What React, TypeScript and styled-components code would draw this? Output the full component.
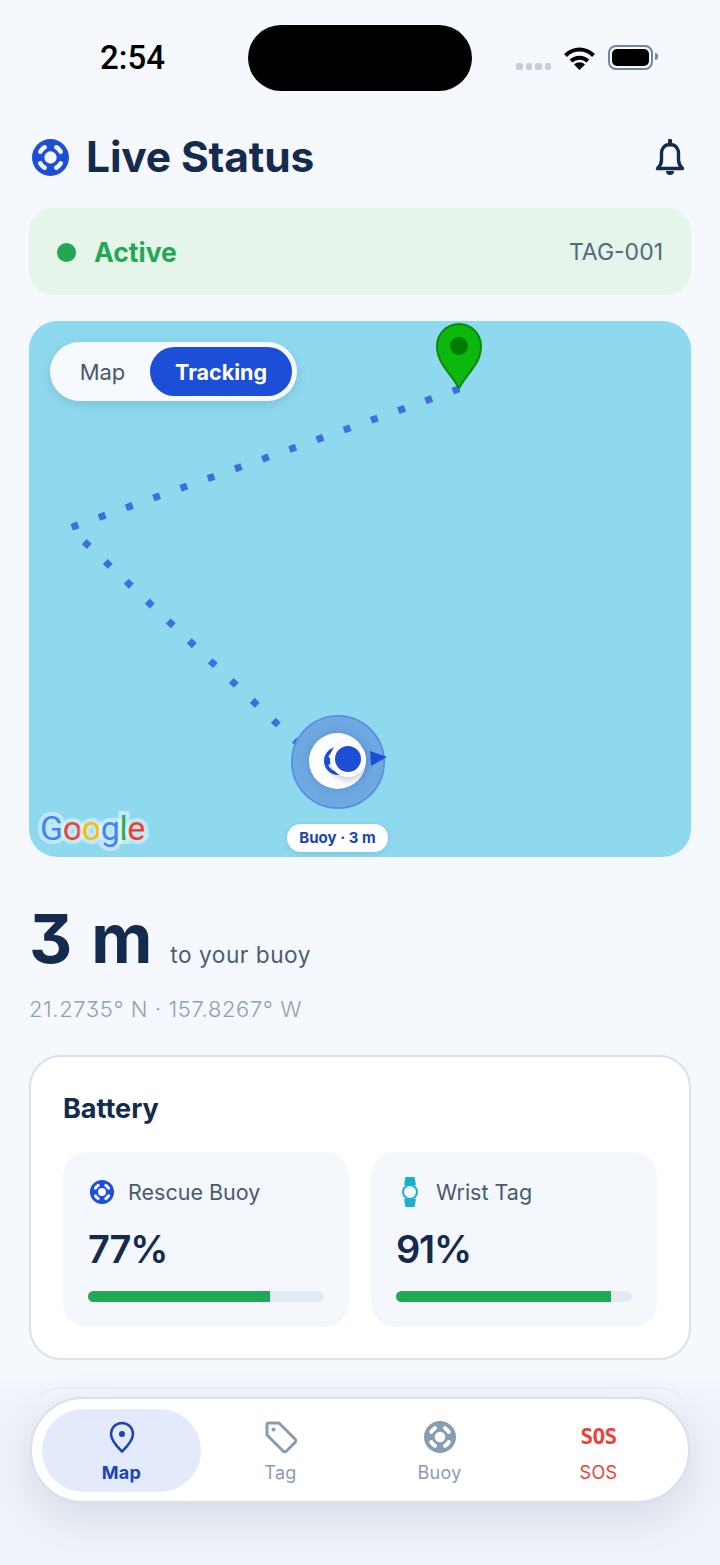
import React from "react";
import styled, { createGlobalStyle } from "styled-components";

const GlobalStyle = createGlobalStyle`
  html, body {
    margin: 0;
    padding: 0;
    background: #f5f8fd;
  }
  * {
    box-sizing: border-box;
  }
`;

const Page = styled.div`
  position: relative;
  width: 720px;
  height: 1565px;
  overflow: hidden;
  padding: 25px 29px 0;
  background: #f5f8fd;
  font-family: Inter, "Liberation Sans", sans-serif;
  color: #142b4d;
`;

const StatusBar = styled.div`
  display: grid;
  grid-template-columns: 219px 224px 1fr;
  height: 66px;
`;

const Clock = styled.div`
  align-self: center;
  padding: 0 0 0 71px;
  font-family: Roboto, Inter, sans-serif;
  font-size: 33px;
  font-weight: 500;
  line-height: 66px;
  color: #000;
`;

const Island = styled.div`
  background: #000;
  border-radius: 33px;
`;

const StatusIcons = styled.div`
  display: flex;
  align-items: center;
  padding-left: 44px;
`;

const SignalDots = styled.div`
  display: flex;
  gap: 3px;
  margin: 16px 13px 0 0;
`;

const SignalDot = styled.span`
  width: 6.5px;
  height: 7px;
  border-radius: 2px;
  background: #c3cfd9;
`;

const Battery = styled.div`
  position: relative;
  width: 45px;
  height: 25px;
  margin: -2px 0 0 13px;
  padding: 2px;
  border: 2px solid #6f869f;
  border-radius: 8px;
  &::after {
    content: "";
    position: absolute;
    top: 6px;
    right: -7px;
    width: 3px;
    height: 7px;
    border-radius: 0 3px 3px 0;
    background: #6f869f;
  }
`;

const BatteryLevel = styled.div`
  height: 100%;
  border-radius: 5px;
  background: #000;
`;

const Header = styled.header`
  display: flex;
  align-items: center;
  justify-content: space-between;
  height: 50px;
  margin-top: 41px;
  padding: 0 6px 0 3px;
`;

const TitleGroup = styled.div`
  display: flex;
  align-items: center;
  gap: 17px;
`;

const Title = styled.h1`
  margin: 0;
  font-size: 42.5px;
  font-weight: 700;
  line-height: 50px;
  letter-spacing: -0.15px;
`;

const StatusCard = styled.section`
  display: flex;
  align-items: center;
  justify-content: space-between;
  height: 87px;
  margin-top: 26px;
  padding: 1px 28px 0;
  border-radius: 24px;
  background: #e5f5ea;
`;

const ActiveGroup = styled.div`
  display: flex;
  align-items: center;
  gap: 18px;
`;

const ActiveDot = styled.span`
  width: 19px;
  height: 19px;
  border-radius: 50%;
  background: #22a852;
`;

const ActiveText = styled.span`
  font-size: 26.5px;
  font-weight: 700;
  color: #22a852;
`;

const TagId = styled.span`
  font-size: 23px;
  font-weight: 400;
  color: #54677f;
`;

const MapPanel = styled.section`
  position: relative;
  height: 536px;
  margin-top: 26px;
  border-radius: 28px;
  overflow: hidden;
  background: #8fd9ee;
`;

const MapLayer = styled.svg`
  position: absolute;
  inset: 0;
`;

const Toggle = styled.div`
  position: absolute;
  top: 21px;
  left: 21px;
  display: flex;
  align-items: center;
  width: 247px;
  height: 59px;
  padding: 5px;
  border-radius: 30px;
  background: #f6f9fd;
  box-shadow: 0 4px 12px rgba(20, 60, 100, 0.14);
`;

const ToggleOption = styled.div<{ $active?: boolean }>`
  display: flex;
  align-items: center;
  justify-content: center;
  height: 49px;
  border-radius: 25px;
  width: ${(p) => (p.$active ? "142px" : "95px")};
  font-size: ${(p) => (p.$active ? "21.5px" : "22px")};
  font-weight: ${(p) => (p.$active ? 700 : 400)};
  color: ${(p) => (p.$active ? "#fff" : "#475a72")};
  background: ${(p) => (p.$active ? "#1d4ed8" : "transparent")};
`;

const Halo = styled.div`
  position: absolute;
  left: 262px;
  top: 394px;
  width: 94px;
  height: 94px;
  border-radius: 50%;
  border: 2px solid #5f8de3;
  background: radial-gradient(circle, #6ea8e0 0 68%, #80c0e8 76%);
`;

const MarkerDisc = styled.div`
  position: absolute;
  left: 280px;
  top: 412px;
  width: 57px;
  height: 56px;
  display: flex;
  align-items: center;
  justify-content: center;
  border-radius: 50%;
  background: #fff;
  box-shadow: 0 0 10px rgba(30, 70, 160, 0.22);
`;

const MarkerDot = styled.div`
  position: absolute;
  left: 301px;
  top: 420px;
  width: 36px;
  height: 36px;
  border-radius: 50%;
  border: 5px solid #fff;
  background: #1d4ed8;
  box-shadow: 0 3px 7px rgba(20, 40, 90, 0.25);
`;

const BuoyLabel = styled.div`
  position: absolute;
  left: 258px;
  top: 503px;
  width: 101px;
  height: 28px;
  border-radius: 14px;
  background: #fff;
  text-align: center;
  font-size: 15px;
  font-weight: 700;
  line-height: 28px;
  color: #1b44b0;
  box-shadow: 0 2px 6px rgba(20, 60, 100, 0.12);
`;

const GoogleMark = styled.div`
  position: absolute;
  left: 11px;
  top: 483px;
  font-family: Roboto, "Liberation Sans", sans-serif;
  font-size: 34px;
  font-weight: 400;
  line-height: 48px;
  letter-spacing: -0.4px;
`;

const GoogleLetter = styled.span<{ $color: string }>`
  color: ${(p) => p.$color};
  -webkit-text-stroke: 8px rgba(255, 255, 255, 0.45);
  paint-order: stroke fill;
`;

const DistanceRow = styled.div`
  display: flex;
  align-items: baseline;
  gap: 18px;
  height: 92px;
  margin-top: 36px;
`;

const DistanceValue = styled.div`
  font-size: 67px;
  font-weight: 700;
  line-height: 92px;
  word-spacing: 3px;
  font-feature-settings: "cv09";
`;

const DistanceCaption = styled.div`
  font-size: 22.7px;
  line-height: 30px;
  letter-spacing: 0.5px;
  color: #4b6078;
`;

const Coordinates = styled.div`
  margin-top: 10px;
  font-size: 22px;
  font-weight: 300;
  line-height: 28px;
  letter-spacing: 0.6px;
  color: #8ea1b3;
  font-feature-settings: "cv09";
`;

const Card = styled.section`
  margin-top: 32px;
  padding: 32px;
  height: 305px;
  border: 2px solid #d8e1ec;
  border-radius: 32px;
  background: #fff;
`;

const NextCard = styled(Card)`
  margin-top: 27px;
`;

const CardTitle = styled.h2`
  margin: 0;
  font-size: 27px;
  font-weight: 700;
  line-height: 40px;
`;

const BatteryGrid = styled.div`
  display: grid;
  grid-template-columns: 1fr 1fr;
  gap: 22px;
  margin-top: 23px;
`;

const BatteryTile = styled.div`
  height: 175px;
  padding: 24px 25px;
  border-radius: 24px;
  background: #f4f7fc;
`;

const TileHead = styled.div`
  display: flex;
  align-items: center;
  gap: 14px;
  height: 32px;
  padding-left: 2px;
`;

const TileIcon = styled.div`
  display: flex;
  align-items: center;
  justify-content: center;
  width: 24px;
`;

const TileLabel = styled.span`
  font-size: 21.5px;
  color: #475a72;
`;

const TileValue = styled.div`
  margin-top: 15px;
  font-size: 38px;
  font-weight: 600;
  line-height: 52px;
  letter-spacing: -1.2px;
`;

const BarTrack = styled.div`
  height: 11px;
  margin-top: 16px;
  border-radius: 6px;
  overflow: hidden;
  background: #e4eaf3;
`;

const BarFill = styled.div`
  height: 100%;
  background: #22a852;
`;

const Dock = styled.div`
  position: absolute;
  left: 0;
  right: 0;
  bottom: 0;
  height: 195px;
  padding: 27px 30px 0;
  background: linear-gradient(
    rgba(240, 244, 250, 0) 0,
    rgba(240, 244, 250, 0.75) 20px,
    #eff3f9 38px,
    #eff3f9 100%
  );
`;

const Nav = styled.nav`
  display: grid;
  grid-template-columns: repeat(4, 1fr);
  height: 106px;
  padding: 10px;
  border: 2px solid #d8e1ec;
  border-radius: 53px;
  background: #fff;
  box-shadow: 0 14px 40px rgba(40, 70, 120, 0.14);
`;

const NavItem = styled.div<{ $active?: boolean; $color: string }>`
  display: flex;
  flex-direction: column;
  align-items: center;
  height: 83px;
  padding-top: 11px;
  border-radius: 42px;
  background: ${(p) => (p.$active ? "#e3eafb" : "transparent")};
  color: ${(p) => p.$color};
`;

const NavIconSlot = styled.div`
  display: flex;
  align-items: center;
  justify-content: center;
  height: 34px;
`;

const NavLabel = styled.span<{ $active?: boolean }>`
  margin-top: 6px;
  font-size: 18px;
  font-weight: ${(p) => (p.$active ? 700 : 400)};
  line-height: 26px;
  letter-spacing: 0.3px;
`;

const SosGlyph = styled.span`
  font-family: "DejaVu Sans Mono", monospace;
  font-size: 21px;
  font-weight: 700;
  line-height: 30px;
  letter-spacing: -0.6px;
`;

const Lifebuoy: React.FC<{ size: number; color: string; hole: string }> = ({ size, color, hole }) => (
  <svg width={size} height={size} viewBox="0 0 24 24">
    <circle cx="12" cy="12" r="12" fill={color} />
    <circle cx="12" cy="12" r="4" fill={hole} />
    <g fill="none" stroke={hole} strokeWidth="3" strokeLinecap="round">
      <path d="M15.800 5.400A7.600 7.600 0 0 1 18.600 8.200" />
      <path d="M18.600 15.800A7.600 7.600 0 0 1 15.800 18.600" />
      <path d="M8.200 18.600A7.600 7.600 0 0 1 5.400 15.800" />
      <path d="M5.400 8.200A7.600 7.600 0 0 1 8.200 5.400" />
    </g>
  </svg>
);

const BellIcon = () => (
  <svg width="30" height="37" viewBox="0 0 30 37" fill="none" stroke="#142b4d" strokeWidth="3.4">
    <path d="M15 5.500C9.500 5.500 6.500 9.500 6.500 15v6c0 4-2 6.500-4 8.500h25c-2-2-4-4.500-4-8.500v-6C23.500 9.500 20.500 5.500 15 5.500Z" strokeLinejoin="round" />
    <path d="M15 1.500v4" strokeLinecap="round" strokeWidth="4" />
    <path d="M11 32a4 4 0 0 0 8 0Z" fill="#142b4d" stroke="none" />
  </svg>
);

const WifiIcon = () => (
  <svg width="31" height="23" viewBox="0 0 31 23" fill="none" stroke="#000" strokeWidth="4">
    <path d="M1.500 8.500C9.500 .5 21.500 .5 29.500 8.500" />
    <path d="M7 14C12 9.500 19 9.500 24 14" />
    <path d="M10 17.500 15.500 23 21 17.500C17.500 14.500 13.500 14.500 10 17.500Z" fill="#000" stroke="none" />
  </svg>
);

const WatchIcon = () => (
  <svg width="18" height="30" viewBox="0 0 18 30" fill="#1fb0c9">
    <path d="M4.500 0h9L15 8H3Z" />
    <path d="M3 22h12l-1.500 8h-9Z" />
    <circle cx="9" cy="15" r="7" fill="#f4f7fc" stroke="#1fb0c9" strokeWidth="2" />
  </svg>
);

const PinIcon = () => (
  <svg width="28" height="32" viewBox="0 0 28 32" fill="none" stroke="currentColor" strokeWidth="2.500">
    <path d="M14 30.500C10 26.500 3 20 3 13a11 11 0 0 1 22 0c0 7-7 13.500-11 17.500Z" strokeLinejoin="round" />
    <circle cx="14" cy="13" r="3" fill="currentColor" stroke="none" />
  </svg>
);

const TagIcon = () => (
  <svg width="32" height="32" viewBox="0 0 32 32" fill="none" stroke="currentColor" strokeWidth="3">
    <path d="M2 3.500A1.500 1.500 0 0 1 3.500 2H14l16 16a2.500 2.500 0 0 1 0 3.500L21.500 30a2.500 2.500 0 0 1-3.500 0L2 14Z" strokeLinejoin="round" />
    <circle cx="8.500" cy="8.500" r="2" fill="currentColor" stroke="none" />
  </svg>
);

const googleLetters = [
  { ch: "G", color: "#4285f4" },
  { ch: "o", color: "#ea4335" },
  { ch: "o", color: "#fbbc05" },
  { ch: "g", color: "#4285f4" },
  { ch: "l", color: "#34a853" },
  { ch: "e", color: "#ea4335" },
];

const App: React.FC = () => {
  return (
    <Page>
      <GlobalStyle />
      <StatusBar>
        <Clock>2:54</Clock>
        <Island />
        <StatusIcons>
          <SignalDots>
            {[0, 1, 2, 3].map((i) => (
              <SignalDot key={i} />
            ))}
          </SignalDots>
          <WifiIcon />
          <Battery>
            <BatteryLevel />
          </Battery>
        </StatusIcons>
      </StatusBar>

      <Header>
        <TitleGroup>
          <Lifebuoy size={37} color="#1d4ed8" hole="#f5f8fd" />
          <Title>Live Status</Title>
        </TitleGroup>
        <BellIcon />
      </Header>

      <StatusCard>
        <ActiveGroup>
          <ActiveDot />
          <ActiveText>Active</ActiveText>
        </ActiveGroup>
        <TagId>TAG-001</TagId>
      </StatusCard>

      <MapPanel>
        <MapLayer width="662" height="536" viewBox="0 0 662 536">
          <g fill="none" stroke="#3f6fdc" strokeWidth="7" strokeDasharray="7 21.9">
            <path d="M430.300 67.800 42.700 206.200" />
            <path d="M55.200 220.600 270.200 423.700" />
          </g>
          <path
            d="M430 67C420 50 408 42 408 25a22 22 0 0 1 44 0C452 42 440 50 430 67Z"
            fill="#0cb80c"
            stroke="#0a8a0a"
            strokeWidth="2"
          />
          <circle cx="430" cy="25" r="9" fill="#007a00" />
        </MapLayer>
        <Toggle>
          <ToggleOption>Map</ToggleOption>
          <ToggleOption $active>Tracking</ToggleOption>
        </Toggle>
        <Halo />
        <MarkerDisc>
          <Lifebuoy size={28} color="#1d4ed8" hole="#fff" />
        </MarkerDisc>
        <MarkerDot />
        <MapLayer width="662" height="536" viewBox="0 0 662 536">
          <path d="M341 430 358 436 342 445Z" fill="#1d4ed8" />
        </MapLayer>
        <BuoyLabel>Buoy · 3 m</BuoyLabel>
        <GoogleMark>
          {googleLetters.map((l, i) => (
            <GoogleLetter key={i} $color={l.color}>
              {l.ch}
            </GoogleLetter>
          ))}
        </GoogleMark>
      </MapPanel>

      <DistanceRow>
        <DistanceValue>3 m</DistanceValue>
        <DistanceCaption>to your buoy</DistanceCaption>
      </DistanceRow>
      <Coordinates>21.2735° N · 157.8267° W</Coordinates>

      <Card>
        <CardTitle>Battery</CardTitle>
        <BatteryGrid>
          <BatteryTile>
            <TileHead>
              <TileIcon>
                <Lifebuoy size={24} color="#1d4ed8" hole="#f4f7fc" />
              </TileIcon>
              <TileLabel>Rescue Buoy</TileLabel>
            </TileHead>
            <TileValue>77%</TileValue>
            <BarTrack>
              <BarFill style={{ width: "77%" }} />
            </BarTrack>
          </BatteryTile>
          <BatteryTile>
            <TileHead>
              <TileIcon>
                <WatchIcon />
              </TileIcon>
              <TileLabel>Wrist Tag</TileLabel>
            </TileHead>
            <TileValue>91%</TileValue>
            <BarTrack>
              <BarFill style={{ width: "91%" }} />
            </BarTrack>
          </BatteryTile>
        </BatteryGrid>
      </Card>
      <NextCard />

      <Dock>
        <Nav>
          <NavItem $active $color="#1b44b0">
            <NavIconSlot>
              <PinIcon />
            </NavIconSlot>
            <NavLabel $active>Map</NavLabel>
          </NavItem>
          <NavItem $color="#8a9db0">
            <NavIconSlot>
              <TagIcon />
            </NavIconSlot>
            <NavLabel>Tag</NavLabel>
          </NavItem>
          <NavItem $color="#8a9db0">
            <NavIconSlot>
              <Lifebuoy size={32} color="#8a9db0" hole="#fff" />
            </NavIconSlot>
            <NavLabel>Buoy</NavLabel>
          </NavItem>
          <NavItem $color="#ea4335">
            <NavIconSlot>
              <SosGlyph>SOS</SosGlyph>
            </NavIconSlot>
            <NavLabel>SOS</NavLabel>
          </NavItem>
        </Nav>
      </Dock>
    </Page>
  );
};

export default App;
